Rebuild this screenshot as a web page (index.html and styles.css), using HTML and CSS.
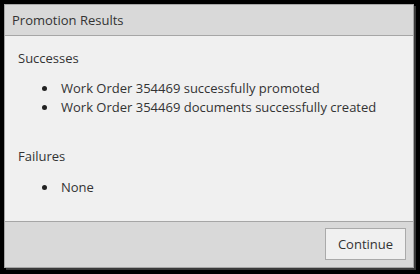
FILE: index.html
```html
<!DOCTYPE html>
<html>
<head>
<meta charset="utf-8">
<link rel="stylesheet" href="styles.css">
</head>
<body>
<div class="dialog">
  <div class="header">Promotion Results</div>
  <div class="content">
    <div class="section-title">Successes</div>
    <ul class="list">
      <li>Work Order 354469 successfully promoted</li>
      <li>Work Order 354469 documents successfully created</li>
    </ul>
    <div class="section-title failures">Failures</div>
    <ul class="list list-last">
      <li>None</li>
    </ul>
  </div>
  <div class="footer">
    <button class="btn">Continue</button>
  </div>
</div>
</body>
</html>
```
FILE: styles.css
```css
html, body {
  margin: 0;
  padding: 0;
  background: #000;
  width: 420px;
  height: 274px;
  overflow: hidden;
}
body {
  font-family: "Open Sans", "Liberation Sans", sans-serif;
  font-size: 13px;
  color: #333;
}
.dialog {
  margin: 4px 0 0 4px;
  width: 408px;
  height: 262px;
  border: 1px solid #a6a6a6;
  background: #f0f0f0;
  display: flex;
  flex-direction: column;
  box-shadow: 2px 2px 0 #3a3a3a;
}
.header {
  height: 30px;
  line-height: 30px;
  background: #d9d9d9;
  border-bottom: 1px solid #a6a6a6;
  padding-left: 7px;
}
.content {
  flex: 1;
  padding: 13px 13px 0;
}
.section-title {
  line-height: 18px;
}
.list {
  margin: 12px 0 0;
  padding-left: 24px;
  line-height: 19px;
  list-style: none;
}
.list li {
  display: flex;
  align-items: center;
}
.list li::before {
  content: "";
  width: 5px;
  height: 5px;
  border-radius: 50%;
  background: #222;
  margin-right: 14px;
  flex: none;
}
.failures {
  margin-top: 30px;
}
.list-last {
  margin-top: 13px;
}
.footer {
  height: 46px;
  background: #d9d9d9;
  border-top: 1px solid #a6a6a6;
  display: flex;
  justify-content: flex-end;
  align-items: flex-start;
  padding: 6px 7px 0 0;
  box-sizing: border-box;
}
.btn {
  font-family: "Open Sans", "Liberation Sans", sans-serif;
  font-size: 13px;
  color: #333;
  background: #f0f0f0;
  border: 1px solid #aaa;
  width: 81px;
  height: 32px;
  padding: 0;
}
```
